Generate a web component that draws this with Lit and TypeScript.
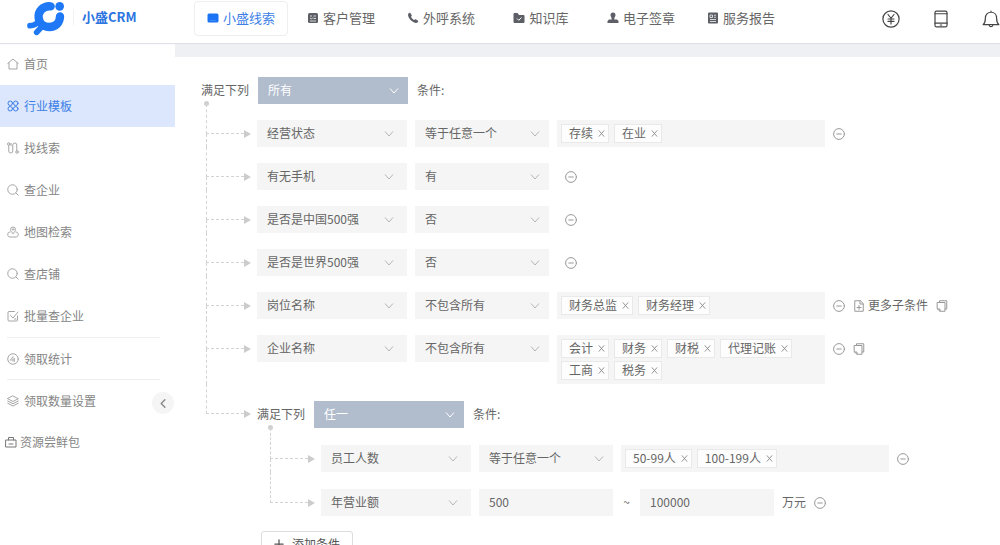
import { LitElement, html, css, svg, nothing, type TemplateResult } from "lit";
import { customElement, property } from "lit/decorators.js";
import { classMap } from "lit/directives/class-map.js";

const line = (body: unknown, size = 12, box = 24, width = 2) => html`<svg
  width=${size} height=${size} viewBox="0 0 ${box} ${box}" fill="none" stroke="currentColor"
  stroke-width=${width} stroke-linecap="round" stroke-linejoin="round" aria-hidden="true">${body}</svg>`;

const solid = (body: unknown) => html`<svg
  width="12" height="12" viewBox="0 0 24 24" fill="currentColor" aria-hidden="true">${body}</svg>`;

const icons = {
  card: solid(svg`<rect x="1" y="3" width="22" height="18" rx="3"/><path d="M6 17h12" stroke="#4a90fa" stroke-width="1.500"/>`),
  customer: solid(svg`<rect x="2" y="2" width="20" height="20" rx="3"/><path d="M6 8h4M13 8h5M6 12l3 2 3-3M13 13h5M6 18h12" stroke="#fff" stroke-width="1.500" fill="none"/>`),
  phone: solid(svg`<path d="M3 3c1-1.500 3-2 4-.5l2.500 4c.6 1-.8 2.200-1.500 3 1.400 3 3.600 5.200 6.600 6.600.8-.8 1.800-2.200 2.900-1.600l4 2.500c1.400 1 .8 2.800-.5 4C14 25.500-2 10 3 3z"/>`),
  folder: solid(svg`<path d="M1 4a2 2 0 0 1 2-2h6l3 4h9a2 2 0 0 1 2 2v12a2 2 0 0 1-2 2H3a2 2 0 0 1-2-2z"/><path d="M8 13l3.500 3.500L17 11" fill="none" stroke="#fff" stroke-width="2"/>`),
  stamp: solid(svg`<path d="M12 1a5 5 0 0 1 5 5c0 3-2.500 4-2.500 9H20l3 3v4H1v-4l3-3h5.500C9.500 10 7 9 7 6a5 5 0 0 1 5-5z"/>`),
  report: solid(svg`<rect x="2" y="1" width="20" height="22" rx="2"/><path d="M6 6h5v5H6zM14 6.500h4M14 10.500h4M6 15h12M6 19h12" stroke="#fff" stroke-width="1.500" fill="none"/>`),
  home: line(svg`<path d="M1.500 11L12 2l10.500 9M4 9.500V22h16V9.500"/>`),
  grid: line(svg`<circle cx="6.500" cy="6.500" r="4.500"/><circle cx="17.500" cy="6.500" r="4.500"/><circle cx="6.500" cy="17.500" r="4.500"/><circle cx="17.500" cy="17.500" r="4.500"/>`),
  route: line(svg`<circle cx="3.500" cy="4" r="2.500"/><path d="M3.500 7v11a4 4 0 0 0 8 0V6a3.500 3.500 0 0 1 8 0v11"/><circle cx="20" cy="20" r="2.500"/><path d="M8 7V3"/>`),
  search: line(svg`<circle cx="11" cy="11" r="9.500"/><path d="M18 18l4.500 4.500"/>`),
  map: line(svg`<path d="M12 15c-3.500-3.500-5-5.500-5-8a5 5 0 0 1 10 0c0 2.500-1.500 4.500-5 8z"/><circle cx="12" cy="7" r="1.500"/><path d="M6 12c-3 0-4.500 2-4.500 5s1.500 5 4 5h13c2.500 0 4-2 4-5s-1.500-5-4.500-5"/>`),
  check: line(svg`<path d="M21 12v8a2 2 0 0 1-2 2H4a2 2 0 0 1-2-2V5a2 2 0 0 1 2-2h11M7 11l5 5L22 4M15 18h3"/>`),
  stats: line(svg`<circle cx="12" cy="12" r="10.500"/><path d="M7 14l5-7v10M15 11v6M7 14h8" stroke-width="1.500"/>`),
  layers: line(svg`<path d="M12 2l10.500 5.500L12 13 1.500 7.500zM1.500 12L12 17.500 22.500 12M1.500 16.500L12 22l10.500-5.500"/>`),
  bag: line(svg`<path d="M2 8h20v14H2zM7 8V3h10v5M8 16h8"/>`, 12, 24, 2),
  minus: line(svg`<circle cx="12" cy="12" r="10.800"/><path d="M7.500 12h9"/>`),
  addDoc: line(svg`<path d="M14 1.500H3.500v21h17V8zM14 1.500V8h6.500M12 11v8M8 15h8"/>`),
  copy: line(svg`<path d="M7 5V1.500h14.500V18H18M3 5h15v17.500H8L3 18zM8 22v-4H3"/>`),
  close: line(svg`<path d="M3 2l14 16M17 2L3 18"/>`, 7, 20, 2.5),
  yen: line(svg`<circle cx="12" cy="12" r="10.800"/><path d="M8 6l4 5 4-5M12 11v7.500M8 12h8M8 15.200h8"/>`, 18, 24, 1.6),
  mobile: line(svg`<rect x="4" y="1.500" width="16" height="21" rx="2"/><path d="M4 5h16M4 17.500h16M11 20h2"/>`, 18, 24, 1.6),
  bell: line(svg`<path d="M1.500 19.500h21c-2.500-2-3-4-3-8.500 0-5-3-8-7.500-8s-7.500 3-7.500 8c0 4.500-.5 6.500-3 8.500zM12 3V1.500M9.500 20c.5 3 4.500 3 5 0"/>`, 18, 24, 1.6),
  collapse: line(svg`<path d="M15 4l-8 8 8 8"/>`, 11, 24, 3),
  plus: line(svg`<path d="M12 2v20M2 12h20"/>`, 10, 24, 3),
};

const shared = css`
  :host, * { box-sizing: border-box; }
  button, select, input {
    margin: 0; padding: 0; border: 0; background: none; border-radius: 0;
    font: inherit; color: inherit; appearance: none; outline: none;
  }
  button { cursor: pointer; }
  svg { display: block; flex: none; }
`;

@customElement("drop-down")
class DropDown extends LitElement {
  @property() value = "";
  @property() label = "";
  @property() kind = "field";

  static styles = [shared, css`
    :host { display: block; flex: 0 1 auto; min-width: 0; }
    .box { display: grid; align-items: center; height: 27px; background: #f5f5f5; }
    .box > * { grid-area: 1 / 1; }
    .control { width: 100%; height: 27px; padding: 0 0 2px 10px; line-height: 25px; cursor: pointer; }
    .arrow { justify-self: end; margin-right: 9px; pointer-events: none; color: #b5b5b5; }
    .field, .match { width: 150px; }
    .field .arrow { margin-right: 13px; }
    .operator { width: 134px; }
    .match { background: #b1bccd; color: #fff; }
    .match .arrow { color: #fff; }
  `];

  render() {
    return html`<div class="box ${this.kind}">
      <select class="control" aria-label=${this.label}><option>${this.value}</option></select>
      <svg class="arrow" width="10" height="6" viewBox="0 0 10 6" fill="none" stroke="currentColor"><path d="M1 .5l4 4.500 4-4.500"/></svg>
    </div>`;
  }
}

@customElement("side-bar")
class SideBar extends LitElement {
  static styles = [shared, css`
    :host { position: relative; display: block; flex: none; width: 175px; background: #fff; }
    .item {
      display: flex; align-items: center; gap: 5px; height: 42px; padding-left: 7px;
      color: #858585; text-decoration: none; line-height: 16px;
    }
    .item svg { color: #a5a5a5; }
    .active, .active svg { color: #3d7fe6; }
    .active { background: #dce7fd; }
    .ruled { margin-right: 15px; margin-left: 7px; padding-left: 0; border-top: 1px solid #eee; }
    .package { gap: 3px; padding-left: 5px; }
    .package svg { color: #777; }
    .collapse {
      position: absolute; top: 349px; right: 1px; display: grid; place-items: center;
      width: 22px; height: 22px; border-radius: 50%; background: #f5f5f5; color: #888;
    }
  `];

  private items: [TemplateResult, string, string?][] = [
    [icons.home, "首页"],
    [icons.grid, "行业模板", "active"],
    [icons.route, "找线索"],
    [icons.search, "查企业"],
    [icons.map, "地图检索"],
    [icons.search, "查店铺"],
    [icons.check, "批量查企业"],
    [icons.stats, "领取统计", "ruled"],
    [icons.layers, "领取数量设置", "ruled"],
    [icons.bag, "资源尝鲜包", "package"],
  ];

  render() {
    return html`<nav>${this.items.map(([icon, text, kind]) => html`
        <a class=${classMap({ item: true, ...(kind ? { [kind]: true } : {}) })} href="#">${icon}<span>${text}</span></a>`)}
      </nav>
      <button class="collapse" aria-label="收起">${icons.collapse}</button>`;
  }
}

@customElement("top-bar")
class TopBar extends LitElement {
  static styles = [shared, css`
    :host {
      position: relative; z-index: 1; display: flex; align-items: flex-start; height: 43px; padding: 1px 0 0 26px;
      background: #fff; box-shadow: 0 1px 1px #dfe1e6; white-space: nowrap;
    }
    .logo { margin-right: 7px; }
    .name {
      margin: 8px 0 0; padding-left: 8px; width: 121px; border-left: 1px solid #f2f2f2;
      font-size: 13px; line-height: 16px; font-weight: 700; color: #2c74e0;
    }
    .nav { display: flex; gap: 6px; }
    .tab {
      display: flex; align-items: center; justify-content: center; gap: 4px;
      width: 94px; height: 35px; padding-bottom: 2px; border: 1px solid transparent; border-radius: 4px;
      font-size: 13px; color: #666; text-decoration: none;
    }
    .tab svg { color: #5c5f66; }
    .current { border-color: #eee; color: #3d7fe6; }
    .current svg { color: #1c74f5; }
    .tools { display: flex; gap: 32px; margin: 9px 0 0 auto; color: #444; }
  `];

  private tabs: [TemplateResult, string][] = [
    [icons.card, "小盛线索"],
    [icons.customer, "客户管理"],
    [icons.phone, "外呼系统"],
    [icons.folder, "知识库"],
    [icons.stamp, "电子签章"],
    [icons.report, "服务报告"],
  ];

  render() {
    return html`
      <svg class="logo" width="40" height="36" viewBox="78 2 120 108" fill="none" stroke="#1f78f5" stroke-linecap="round" aria-hidden="true">
        <path d="M152 18 C128 16 114 34 116 52 C118 70 132 80 148 80 C166 80 180 68 180 48" stroke-width="25"/>
        <path d="M116 62 C108 74 100 76 90 76" stroke-width="17"/>
        <path d="M126 78 L110 96" stroke-width="17"/>
        <circle cx="179" cy="18" r="13" fill="#1f78f5" stroke="none"/>
      </svg>
      <h1 class="name">小盛CRM</h1>
      <nav class="nav">${this.tabs.map(([icon, text], i) => html`
        <a class=${classMap({ tab: true, current: i === 0 })} href="#">${icon}<span>${text}</span></a>`)}
      </nav>
      <div class="tools">
        <button aria-label="充值">${icons.yen}</button>
        <button aria-label="手机版">${icons.mobile}</button>
        <button aria-label="通知">${icons.bell}</button>
      </div>`;
  }
}

interface Rule {
  field: string;
  operator?: string;
  tags?: string[];
  range?: [string, string, string];
  more?: boolean;
  copy?: boolean;
}

const rules: Rule[] = [
  { field: "经营状态", operator: "等于任意一个", tags: ["存续", "在业"] },
  { field: "有无手机", operator: "有" },
  { field: "是否是中国500强", operator: "否" },
  { field: "是否是世界500强", operator: "否" },
  { field: "岗位名称", operator: "不包含所有", tags: ["财务总监", "财务经理"], more: true, copy: true },
  { field: "企业名称", operator: "不包含所有", tags: ["会计", "财务", "财税", "代理记账", "工商", "税务"], copy: true },
];

const nestedRules: Rule[] = [
  { field: "员工人数", operator: "等于任意一个", tags: ["50-99人", "100-199人"] },
  { field: "年营业额", range: ["500", "100000", "万元"] },
];

@customElement("rule-builder")
class RuleBuilder extends LitElement {
  static styles = [shared, css`
    :host { display: block; flex: 1; min-width: 0; padding: 20px 0 0 26px; border-top: 14px solid #eff0f4; background: #fff; }
    .group { --gap: 16px; --indent: 56px; --stem: 5px; }
    .nested { --gap: 17px; --indent: 64px; --stem: 13px; }
    .head { display: flex; align-items: center; gap: 9px; height: 27px; white-space: nowrap; }
    .head span { padding-bottom: 2px; }
    .dot { width: 5px; height: 5px; margin: -3px 0 -2px calc(var(--stem) - 2px); border-radius: 50%; background: #d0d0d0; }
    .item { display: flex; }
    .branch {
      display: grid; flex: none; width: var(--indent); padding-left: var(--stem);
      grid-template-columns: calc(var(--indent) - var(--stem) - 13px) 7px;
      grid-template-rows: calc(var(--gap) + 14px) 1fr;
    }
    .elbow { border: dashed #d3d3d3; border-width: 0 0 1px 1px; }
    .arrow { align-self: end; margin-bottom: -4px; color: #ccc; }
    .trunk { border-left: 1px dashed #d3d3d3; }
    .item:last-of-type > .branch > .trunk { display: none; }
    .body { flex: 1; min-width: 0; padding-top: var(--gap); }
    .outer-last { padding-top: 17px; }
    .rule { display: flex; align-items: flex-start; gap: 8px; white-space: nowrap; }
    .tags {
      display: flex; flex-wrap: wrap; flex: 0 1 268px; gap: 3px 5px; min-height: 27px;
      margin: 0; padding: 4px; background: #f5f5f5; list-style: none;
    }
    .none { width: 0; }
    .tag {
      display: flex; align-items: center; gap: 5px; height: 19px; padding: 0 3px 0 7px;
      border: 1px solid #e9e9e9; background: #fdfdfd; line-height: 15px;
    }
    .tag span { padding-bottom: 2px; }
    .tag button { color: #888; }
    .number { width: 134px; height: 27px; padding: 0 0 2px 10px; background: #f5f5f5; }
    .range { display: flex; gap: 8px; line-height: 25px; }
    .tilde { width: 11px; text-align: center; }
    .actions { display: flex; align-items: center; gap: 8px; height: 27px; color: #999; }
    .more { display: flex; align-items: center; gap: 3px; }
    .more span { padding-bottom: 1px; color: #666; }
    .add {
      display: flex; align-items: center; justify-content: center; gap: 8px; width: 92px; height: 27px;
      margin: 15px 0 0 4px; padding-bottom: 2px; border: 1px solid #dcdcdc; border-radius: 3px; color: #555;
    }
  `];

  private branch() {
    return html`<div class="branch">
      <div class="elbow"></div>
      <svg class="arrow" width="7" height="8" viewBox="0 0 7 8" fill="currentColor"><path d="M0 0l7 4-7 4z"/></svg>
      <div class="trunk"></div>
    </div>`;
  }

  private rule(r: Rule) {
    return html`<div class="item">${this.branch()}
      <div class="body"><div class="rule">
        <drop-down kind="field" label="字段" value=${r.field}></drop-down>
        ${r.operator ? html`<drop-down kind="operator" label=${`${r.field}条件`} value=${r.operator}></drop-down>` : nothing}
        ${r.range
          ? html`<div class="range">
              <input class="number" aria-label="最小值" .value=${r.range[0]}>
              <span class="tilde">~</span>
              <input class="number" aria-label="最大值" .value=${r.range[1]}>
              <span>${r.range[2]}</span>
            </div>`
          : r.tags
            ? html`<ul class="tags">${r.tags.map((t) => html`<li class="tag"><span>${t}</span><button aria-label=${`移除${t}`}>${icons.close}</button></li>`)}</ul>`
            : html`<div class="none"></div>`}
        <div class="actions">
          <button aria-label="删除">${icons.minus}</button>
          ${r.more ? html`<button class="more">${icons.addDoc}<span>更多子条件</span></button>` : nothing}
          ${r.copy ? html`<button aria-label="复制">${icons.copy}</button>` : nothing}
        </div>
      </div></div>
    </div>`;
  }

  private head(value: string) {
    return html`<div class="head"><span>满足下列</span>
      <drop-down kind="match" label="满足下列" value=${value}></drop-down>
      <span>条件:</span></div>`;
  }

  render() {
    return html`<section class="group">
      ${this.head("所有")}
      <div class="dot"></div>
      <div class="list">
        ${rules.map((r) => this.rule(r))}
        <div class="item">${this.branch()}
          <div class="body outer-last"><section class="group nested">
            ${this.head("任一")}
            <div class="dot"></div>
            <div class="list">${nestedRules.map((r) => this.rule(r))}</div>
            <button class="add">${icons.plus}<span>添加条件</span></button>
          </section></div>
        </div>
      </div>
    </section>`;
  }
}

@customElement("app-root")
class AppRoot extends LitElement {
  static styles = [shared, css`
    :host {
      display: flex; flex-direction: column; height: 100vh; overflow: hidden; background: #fff;
      font-family: "Noto Sans CJK SC", sans-serif; font-size: 12px; line-height: 16px; color: #666;
    }
    .page { display: flex; flex: 1; min-height: 0; }
  `];

  render() {
    return html`<top-bar></top-bar>
      <main class="page"><side-bar></side-bar><rule-builder></rule-builder></main>`;
  }
}
